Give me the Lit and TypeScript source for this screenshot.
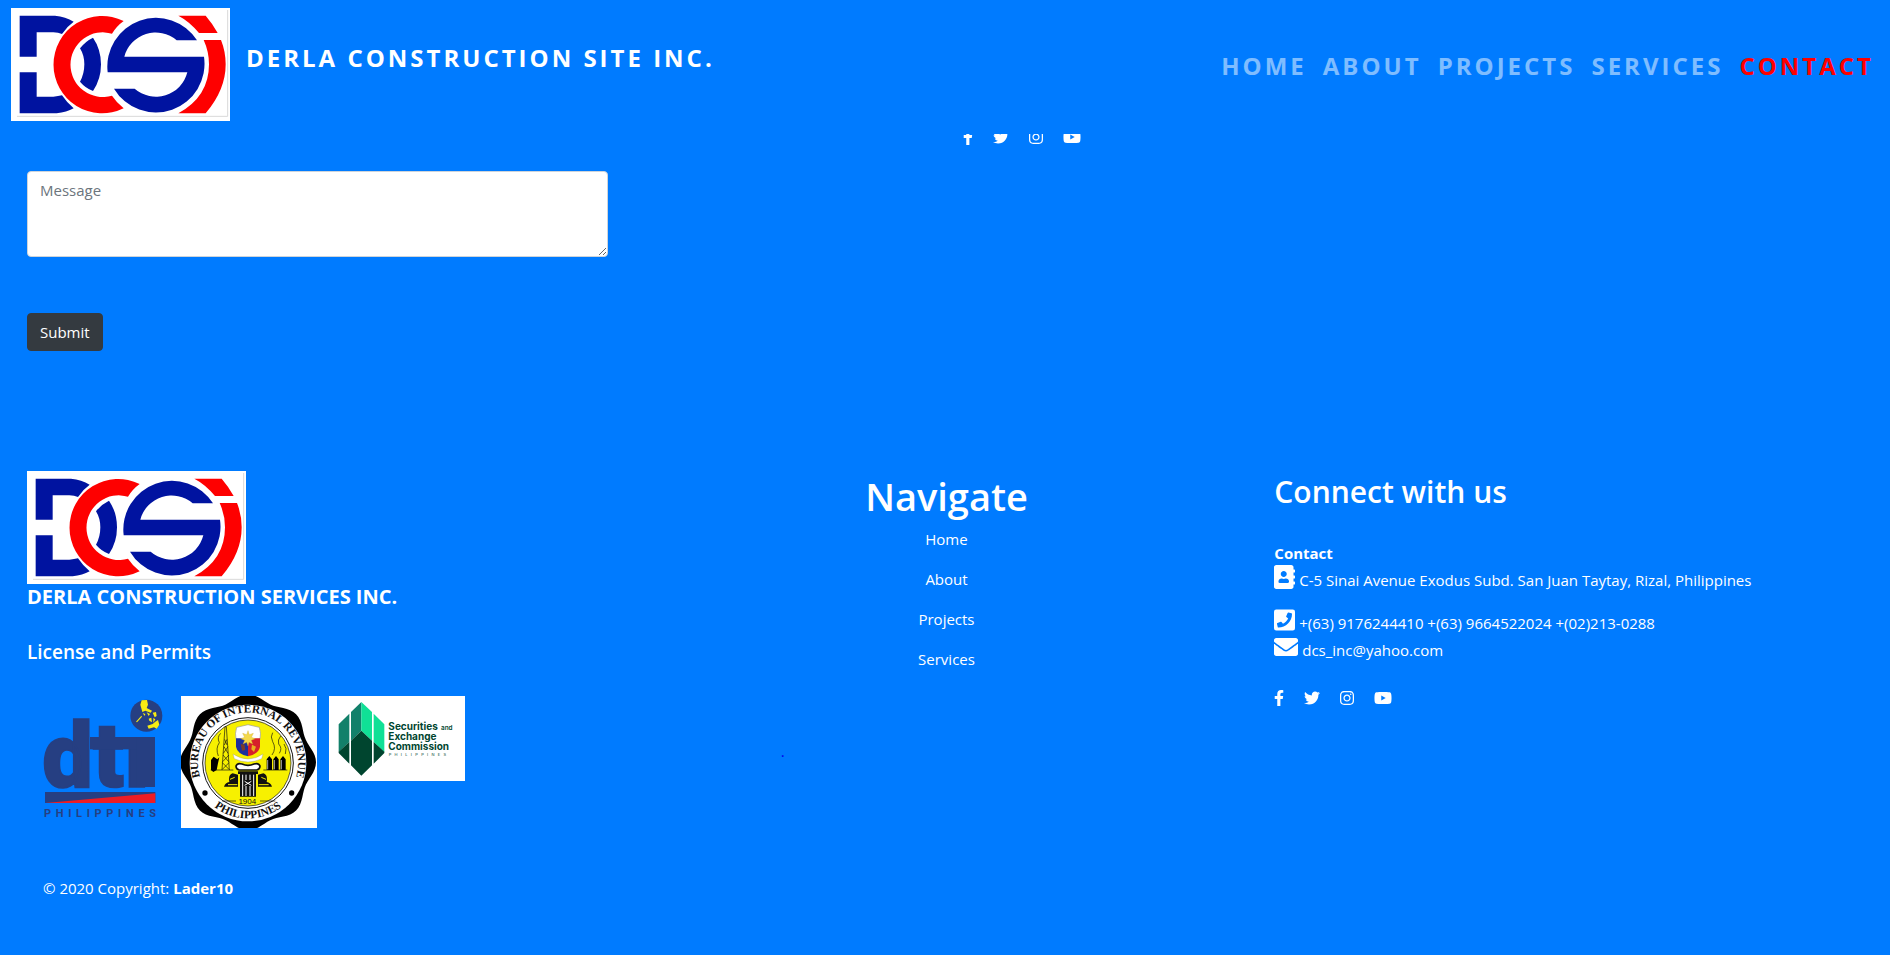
import { LitElement, html, css } from "lit";
import { customElement, property } from "lit/decorators.js";

interface Glyph {
  width: number;
  path: string;
}

const ICONS: Record<string, Glyph> = {
  facebook: {
    width: 320,
    path: "M279.14 288l14.22-92.66h-88.91v-60.13c0-25.35 12.42-50.06 52.24-50.06h40.42V6.26S260.43 0 225.36 0c-73.22 0-121.08 44.38-121.08 124.72v70.62H22.89V288h81.39v224h100.17V288z",
  },
  twitter: {
    width: 512,
    path: "M459.37 151.716c.325 4.548.325 9.097.325 13.645 0 138.72-105.583 298.558-298.558 298.558-59.452 0-114.68-17.219-161.137-47.106 8.447.974 16.568 1.299 25.34 1.299 49.055 0 94.213-16.568 130.274-44.832-46.132-.975-84.792-31.188-98.112-72.772 6.498.974 12.995 1.624 19.818 1.624 9.421 0 18.843-1.3 27.614-3.573-48.081-9.747-84.143-51.98-84.143-102.985v-1.299c13.969 7.797 30.214 12.67 47.431 13.319-28.264-18.843-46.781-51.005-46.781-87.391 0-19.492 5.197-37.36 14.294-52.954 51.655 63.675 129.3 105.258 216.365 109.807-1.624-7.797-2.599-15.918-2.599-24.04 0-57.828 46.782-104.934 104.934-104.934 30.213 0 57.502 12.67 76.67 33.137 23.715-4.548 46.456-13.32 66.599-25.34-7.798 24.366-24.366 44.833-46.132 57.827 21.117-2.273 41.584-8.122 60.426-16.243-14.292 20.791-32.161 39.308-52.628 54.253z",
  },
  instagram: {
    width: 448,
    path: "M224.1 141c-63.6 0-114.9 51.3-114.9 114.9s51.3 114.9 114.9 114.9S339 319.5 339 255.9 287.7 141 224.1 141zm0 189.6c-41.1 0-74.7-33.5-74.7-74.7s33.5-74.7 74.7-74.7 74.7 33.5 74.7 74.7-33.6 74.7-74.7 74.7zm146.4-194.3c0 14.9-12 26.8-26.8 26.8-14.9 0-26.8-12-26.8-26.8s12-26.8 26.8-26.8 26.8 12 26.8 26.8zm76.1 27.2c-1.7-35.9-9.9-67.7-36.2-93.9-26.2-26.2-58-34.4-93.9-36.2-37-2.1-147.9-2.1-184.9 0-35.8 1.7-67.6 9.9-93.9 36.1s-34.4 58-36.2 93.9c-2.1 37-2.1 147.9 0 184.9 1.7 35.9 9.9 67.7 36.2 93.9s58 34.4 93.9 36.2c37 2.1 147.9 2.1 184.9 0 35.9-1.7 67.7-9.9 93.9-36.2 26.2-26.2 34.4-58 36.2-93.9 2.1-37 2.1-147.8 0-184.8zM398.8 388c-7.8 19.6-22.9 34.7-42.6 42.6-29.5 11.7-99.5 9-132.1 9s-102.7 2.6-132.1-9c-19.6-7.8-34.7-22.9-42.6-42.6-11.7-29.5-9-99.5-9-132.1s-2.6-102.7 9-132.1c7.8-19.6 22.9-34.7 42.6-42.6 29.5-11.7 99.5-9 132.1-9s102.7-2.6 132.1 9c19.6 7.8 34.7 22.9 42.6 42.6 11.7 29.5 9 99.5 9 132.1s2.7 102.7-9 132.1z",
  },
  youtube: {
    width: 576,
    path: "M549.655 124.083c-6.281-23.65-24.787-42.276-48.284-48.597C458.781 64 288 64 288 64S117.22 64 74.629 75.486c-23.497 6.322-42.003 24.947-48.284 48.597-11.412 42.867-11.412 132.305-11.412 132.305s0 89.438 11.412 132.305c6.281 23.65 24.787 41.5 48.284 47.821C117.22 448 288 448 288 448s170.78 0 213.371-11.486c23.497-6.321 42.003-24.171 48.284-47.821 11.412-42.867 11.412-132.305 11.412-132.305s0-89.438-11.412-132.305zm-317.51 213.508V175.185l142.739 81.205-142.739 81.201z",
  },
  address: {
    width: 448,
    path: "M436 160c6.6 0 12-5.4 12-12v-40c0-6.6-5.4-12-12-12h-20V48c0-26.5-21.5-48-48-48H48C21.5 0 0 21.5 0 48v416c0 26.5 21.5 48 48 48h320c26.5 0 48-21.5 48-48v-48h20c6.6 0 12-5.4 12-12v-40c0-6.6-5.4-12-12-12h-20v-64h20c6.6 0 12-5.4 12-12v-40c0-6.6-5.4-12-12-12h-20v-64h20zm-228-32c35.3 0 64 28.7 64 64s-28.7 64-64 64-64-28.7-64-64 28.7-64 64-64zm112 236.8c0 10.6-10 19.2-22.4 19.2H118.4C106 384 96 375.4 96 364.8v-19.2c0-31.8 30.1-57.6 67.2-57.6h5c12.3 5.1 25.7 8 39.8 8s27.6-2.9 39.8-8h5c37.1 0 67.2 25.8 67.2 57.6v19.2z",
  },
  phone: {
    width: 448,
    path: "M400 32H48A48 48 0 0 0 0 80v352a48 48 0 0 0 48 48h352a48 48 0 0 0 48-48V80a48 48 0 0 0-48-48zM94 416c-7.033 0-13.057-4.873-14.616-11.627l-14.998-65a15 15 0 0 1 8.707-17.16l69.998-29.999a15 15 0 0 1 17.518 4.289l30.997 37.885c48.944-22.963 88.297-62.858 110.781-110.78l-37.886-30.997a15.001 15.001 0 0 1-4.289-17.518l30-69.998a15 15 0 0 1 17.16-8.707l65 14.998A14.997 14.997 0 0 1 384 126c0 160.292-129.945 290-290 290z",
  },
  envelope: {
    width: 512,
    path: "M502.3 190.8c3.9-3.1 9.7-.2 9.7 4.7V400c0 26.5-21.5 48-48 48H48c-26.5 0-48-21.5-48-48V195.6c0-5 5.7-7.8 9.7-4.7 22.4 17.4 52.1 39.5 154.1 113.6 21.1 15.4 56.7 47.8 92.2 47.6 35.7.3 72-32.8 92.3-47.6 102-74.1 131.6-96.3 154-113.7zM256 320c23.2.4 56.6-29.2 73.4-41.4 132.7-96.3 142.8-104.7 173.4-128.7 5.8-4.5 9.2-11.5 9.2-18.9v-19c0-26.5-21.5-48-48-48H48c-26.5 0-48 21.5-48 48v19c0 7.4 3.4 14.3 9.2 18.9 30.6 23.9 40.7 32.4 173.4 128.7 16.8 12.2 50.2 41.8 73.4 41.4z",
  },
};

const icon = (name: string, size: number) => {
  const g = ICONS[name];
  return html`<svg
    class="icon"
    width=${(g.width / 512) * size}
    height=${size}
    viewBox="0 0 ${g.width} 512"
    aria-hidden="true"
  ><path fill="currentColor" d=${g.path}></path></svg>`;
};

/** Outline of the eight-lobed badge behind the BIR seal. */
const lobedOutline = (cx: number, cy: number): string => {
  const pts: string[] = [];
  for (let deg = 0; deg < 360; deg += 3) {
    const a = (deg * Math.PI) / 180;
    const r = 195 + 9 * Math.cos(8 * a);
    pts.push(`${(cx + r * Math.cos(a)).toFixed(1)},${(cy + r * Math.sin(a)).toFixed(1)}`);
  }
  return pts.join(" ");
};

@customElement("company-logo")
export class CompanyLogo extends LitElement {
  static styles = css`
    :host {
      display: block;
      flex: none;
    }
    .logo {
      display: block;
    }
  `;

  render() {
    return html`<svg class="logo" width="219" height="113" viewBox="33 24 657 339" role="img" aria-label="DCSI logo">
      <rect x="33" y="24" width="657" height="339" fill="#fff"></rect>
      <path d="M683 30V349H51" fill="none" stroke="#d9d9d9" stroke-width="3"></path>
      <g fill="#0013a0">
        <path d="M59 47H165Q197 50 221 65Q200 80 186 102Q175 98 160 97H110V170H59Z"></path>
        <path d="M59 217H110V290H160Q175 289 186 286Q200 307 221 325Q200 337 170 340H59Z"></path>
        <path d="M279 113Q303 148 303 193Q303 238 279 273Q256 264 240 245Q253 222 253 193Q253 166 240 145Q256 124 279 113Z"></path>
        <path d="M591 121H530A97 97 0 0 0 373 170H612A146 146 0 0 1 342 266H404A97 97 0 0 0 562 217H323A146 146 0 0 1 591 121Z"></path>
      </g>
      <g fill="#fe0000">
        <path d="M371 63A146 146 0 1 0 371 325Q350 308 336 287A97 97 0 1 1 336 101Q350 78 371 63Z"></path>
        <path d="M535 47H617Q637 70 653 99H597Q568 64 535 47Z"></path>
        <path d="M611 120H663Q677 155 677 193Q677 270 617 340H535Q627 290 627 193Q627 155 611 120Z"></path>
      </g>
    </svg>`;
  }
}

@customElement("social-links")
export class SocialLinks extends LitElement {
  static styles = css`
    :host {
      display: block;
    }
    .links {
      display: flex;
      gap: 20px;
    }
    .link {
      display: block;
      color: #fff;
    }
    .icon {
      display: block;
    }
  `;

  render() {
    return html`<div class="links">
      ${["facebook", "twitter", "instagram", "youtube"].map(
        (n) => html`<a class="link" href="#${n}" aria-label=${n}>${icon(n, 16)}</a>`,
      )}
    </div>`;
  }
}

@customElement("permit-badges")
export class PermitBadges extends LitElement {
  static styles = css`
    :host {
      display: block;
    }
    .row {
      display: flex;
      flex-wrap: wrap;
      align-items: flex-start;
      gap: 12px;
      padding: 0 6px;
    }
    .badge {
      display: block;
    }
    .dti-mark {
      font: 900 270px Roboto, sans-serif;
      stroke: #263f82;
      stroke-width: 5px;
    }
    .dti-sub {
      font: 700 33px Roboto, sans-serif;
      letter-spacing: 14px;
    }
    .seal-text {
      font: 700 34px "Liberation Serif", serif;
    }
    .seal-year {
      font: 400 24px "Liberation Sans", sans-serif;
    }
    .sec-name {
      font: 700 30px Inter, sans-serif;
    }
    .sec-and {
      font: 600 19px Inter, sans-serif;
    }
    .sec-sub {
      font: 400 12px Inter, sans-serif;
      letter-spacing: 10px;
    }
  `;

  private dti() {
    return html`<svg class="badge" width="136" height="132" viewBox="99 48 408 396" role="img" aria-label="Department of Trade and Industry">
      <g fill="#263f82">
        <text class="dti-mark" x="127" y="320">dtı</text>
        <rect x="270" y="171" width="195" height="37"></rect>
        <rect x="410" y="171" width="55" height="150"></rect>
        <circle cx="439" cy="107" r="48"></circle>
        <rect x="135" y="336" width="331" height="33"></rect>
        <text class="dti-sub" x="132" y="411">PHILIPPINES</text>
      </g>
      <path d="M135 369L466 340V369Z" fill="#ee1c25"></path>
      <path
        d="M425 61L441 60L444 74L440 84L456 92L452 98L436 92L427 96L421 74ZM408 125L424 107L426 110L411 127ZM440 97L450 102L446 108ZM458 98L468 96L470 108L464 112ZM428 99L436 102L434 108ZM446 116L454 113L456 127L448 122ZM460 114L466 118L460 128ZM442 137L458 132L466 125L474 120L478 134L470 146L462 142L446 146Z"
        fill="#f7ec13"
      ></path>
    </svg>`;
  }

  private bir() {
    return html`<svg class="badge" width="136" height="132" viewBox="543 48 408 396" role="img" aria-label="Bureau of Internal Revenue">
      <defs>
        <path id="seal-top" d="M603.5 300A150 150 0 1 1 884.5 300"></path>
        <path id="seal-bottom" d="M599 332A168 168 0 0 0 889 332"></path>
      </defs>
      <rect x="543" y="48" width="408" height="396" fill="#fff"></rect>
      <polygon points=${lobedOutline(744, 247)} fill="#000"></polygon>
      <circle cx="744" cy="249" r="175" fill="#fff"></circle>
      <circle cx="744" cy="249" r="136" fill="#fff" stroke="#111" stroke-width="3"></circle>
      <circle cx="744" cy="249" r="129" fill="#f7f000" stroke="#111" stroke-width="2"></circle>
      <text class="seal-text" fill="#111" text-anchor="middle">
        <textPath href="#seal-top" startOffset="50%">BUREAU OF INTERNAL REVENUE</textPath>
      </text>
      <text class="seal-text" fill="#111" text-anchor="middle">
        <textPath href="#seal-bottom" startOffset="50%">PHILIPPINES</textPath>
      </text>
      <circle cx="615" cy="339" r="8"></circle>
      <circle cx="875" cy="339" r="8"></circle>
      <path d="M710 142L744 134L778 142Q784 160 780 178H708Q704 160 710 142Z" fill="#fff" stroke="#999" stroke-width="2"></path>
      <path d="M708 175H744V229Q712 222 708 200Z" fill="#1c2f9c"></path>
      <path d="M744 175H780V200Q776 222 744 229Z" fill="#d6202a"></path>
      <path d="M722 192L734 194L736 210L726 212Z" fill="#7a3b2a"></path>
      <path d="M756 194L768 200L762 216L754 208Z" fill="#e8b020"></path>
      <path d="M744 152L748 164L760 160L754 172L766 176L754 181L758 192L747 187L744 198L740 187L729 192L734 181L722 176L734 172L728 160L740 164Z" fill="#f4d94a" stroke="#caa41c" stroke-width="1"></path>
      <path d="M699 222Q744 252 789 222L785 236Q744 256 703 236Z" fill="#fff" stroke="#888" stroke-width="1"></path>
      <g fill="none" stroke="#111" stroke-width="2">
        <path d="M666 270L675 140H679L688 270M668 245L687 225M686 245L669 225M670 220L684 200M684 220L672 200M673 195L681 178M681 195L674 178M667 268L687 248M687 268L667 248"></path>
        <path d="M655 228Q646 205 658 188Q650 172 662 160M816 225Q830 205 818 185Q810 170 818 158M838 220Q848 205 836 192Q832 180 842 168M856 222Q862 205 852 192"></path>
        <path d="M632 270H700M790 270H862"></path>
        <path d="M666 363H708M780 363H826"></path>
      </g>
      <path d="M633 270V240L641 230L652 238L658 232L654 250L650 270L640 276Z"></path>
      <path d="M800 270V238L808 228L816 238V270ZM820 270V238L828 228L836 238V270ZM841 270V238L849 228L857 238V270Z"></path>
      <path d="M803 240V268M823 240V268M844 240V268" stroke="#fff" stroke-width="2"></path>
      <path d="M708 258Q712 248 726 252Q744 260 762 252Q776 248 780 258Q780 268 770 270H718Q708 268 708 258Z" fill="#fff" stroke="#111" stroke-width="5"></path>
      <path d="M714 274H774V282H768V350H720V282H714Z" fill="#111"></path>
      <path d="M728 284V348M738 284V300M738 318V348M750 284V300M750 318V348M761 284V348M734 304L754 316M754 304L734 316" stroke="#fff" stroke-width="3"></path>
      <path d="M672 320Q676 308 688 306Q684 284 698 280L714 284V320ZM816 320Q812 308 800 306Q804 284 790 280L774 284V320Z" fill="#111"></path>
      <path d="M690 298L704 292M798 298L784 292M684 314H712M776 314H806" stroke="#f7f000" stroke-width="3"></path>
      <text class="seal-year" x="742" y="373" fill="#111" text-anchor="middle">1904</text>
    </svg>`;
  }

  private sec() {
    return html`<svg class="badge" width="136" height="85" viewBox="987 48 408 255" role="img" aria-label="Securities and Exchange Commission">
      <rect x="987" y="48" width="408" height="255" fill="#fff"></rect>
      <path d="M1016 133L1048 101V186L1016 216ZM1053 96L1084 66V152L1053 182Z" fill="#12806a"></path>
      <path d="M1084 66L1116 96V182L1084 152ZM1121 101L1153 133V216L1121 186Z" fill="#10e096"></path>
      <path d="M1084 152L1116 182V256L1084 287L1053 256V182ZM1048 186V251L1016 219V215ZM1121 186V251L1153 219V215Z" fill="#00452f"></path>
      <g fill="#00452f">
        <text class="sec-name" x="1165" y="150">Securities</text>
        <text class="sec-and" x="1323" y="150">and</text>
        <text class="sec-name" x="1165" y="179">Exchange</text>
        <text class="sec-name" x="1165" y="209">Commission</text>
        <text class="sec-sub" x="1166" y="227">PHILIPPINES</text>
      </g>
    </svg>`;
  }

  render() {
    return html`<div class="row">${this.dti()}${this.bir()}${this.sec()}</div>`;
  }
}

@customElement("site-header")
export class SiteHeader extends LitElement {
  @property() active = "Contact";

  static styles = css`
    :host {
      display: block;
      position: sticky;
      top: 0;
      z-index: 1;
      background: #007bff;
    }
    .bar {
      display: flex;
      align-items: flex-start;
      gap: 16px;
      padding: 8px 16px 13px 11px;
    }
    .brand {
      display: flex;
      align-items: flex-start;
      gap: 16px;
      flex: 1;
      color: #fff;
      text-decoration: none;
    }
    .name {
      margin-top: 32px;
    }
    .name,
    .item {
      font-size: 24px;
      font-weight: 700;
      line-height: 36px;
      letter-spacing: 3px;
      text-transform: uppercase;
    }
    .menu {
      display: flex;
      gap: 16px;
      margin-top: 40px;
    }
    .item {
      color: rgba(255, 255, 255, 0.5);
      text-decoration: none;
    }
    .item.active {
      color: #f00;
    }
  `;

  render() {
    const items = ["Home", "About", "Projects", "Services", "Contact"];
    return html`<header class="bar">
      <a class="brand" href="#home">
        <company-logo></company-logo>
        <span class="name">Derla Construction Site Inc.</span>
      </a>
      <nav class="menu">
        ${items.map(
          (i) => html`<a class="item ${i === this.active ? "active" : ""}" href="#${i.toLowerCase()}">${i}</a>`,
        )}
      </nav>
    </header>`;
  }
}

@customElement("app-root")
export class AppRoot extends LitElement {
  static styles = css`
    :host {
      display: block;
      min-height: 100vh;
      background: #007bff;
      color: #fff;
      font-family: "Open Sans", "Noto Sans", sans-serif;
      font-size: 15px;
      line-height: 24px;
    }
    .contact {
      display: grid;
      grid-template-columns: 1fr 1fr;
      gap: 32px;
      padding: 0 24px 0 27px;
    }
    .form {
      display: flex;
      flex-direction: column;
      align-items: flex-start;
      gap: 56px;
      padding-top: 37px;
    }
    .message {
      display: block;
      box-sizing: border-box;
      width: 100%;
      max-width: 581px;
      height: 86px;
      padding: 6px 12px;
      border: 1px solid #ced4da;
      border-radius: 4px;
      background: #fff;
      color: #495057;
      font: inherit;
      resize: vertical;
    }
    .message::placeholder {
      color: #6c757d;
      opacity: 1;
    }
    .submit {
      padding: 6px 12px;
      border: 1px solid #343a40;
      border-radius: 4px;
      background: #343a40;
      color: #fff;
      font: inherit;
    }
    /* The row slides under the sticky header. */
    .peek {
      margin-top: -5px;
    }
    .footer {
      display: grid;
      grid-template-columns: repeat(3, 1fr);
      gap: 32px;
      padding: 120px 24px 0 27px;
    }
    .company,
    .permits,
    .navigate,
    .connect {
      margin: 0;
      font-weight: 600;
    }
    .company {
      font-size: 20px;
      font-weight: 700;
      line-height: 26px;
    }
    .permits {
      margin: 30px 0 32px;
      font-size: 19px;
      line-height: 24px;
    }
    .middle {
      text-align: center;
    }
    .navigate {
      margin-bottom: 6px;
      font-size: 38px;
      line-height: 50px;
    }
    .list {
      display: flex;
      flex-direction: column;
      gap: 16px;
      margin: 0;
      padding: 0;
      list-style: none;
    }
    .link {
      color: #fff;
      text-decoration: none;
    }
    .dot {
      display: block;
      margin-top: 68px;
      color: #00e;
      text-align: left;
      text-decoration: none;
    }
    .mark {
      margin-left: 130px;
    }
    .connect {
      margin-bottom: 28px;
      font-size: 30px;
      line-height: 42px;
    }
    .line {
      display: block;
      color: #fff;
      font-style: normal;
      text-decoration: none;
    }
    .spaced {
      margin-bottom: 16px;
    }
    .icon {
      vertical-align: -3px;
    }
    .social {
      margin-top: 28px;
    }
    .copyright {
      padding: 48px 43px 24px;
    }
  `;

  render() {
    return html`
      <site-header active="Contact"></site-header>
      <main class="contact">
        <form class="form" @submit=${(e: Event) => e.preventDefault()}>
          <textarea class="message" aria-label="Message" placeholder="Message"></textarea>
          <button class="submit" type="submit">Submit</button>
        </form>
        <social-links class="peek"></social-links>
      </main>
      <footer>
        <div class="footer">
          <section>
            <company-logo></company-logo>
            <h2 class="company">DERLA CONSTRUCTION SERVICES INC.</h2>
            <h2 class="permits">License and Permits</h2>
            <permit-badges></permit-badges>
          </section>
          <section class="middle">
            <h1 class="navigate">Navigate</h1>
            <ul class="list">
              ${["Home", "About", "Projects", "Services"].map(
                (i) => html`<li><a class="link" href="#${i.toLowerCase()}">${i}</a></li>`,
              )}
            </ul>
            <a class="dot" href="#top"><span class="mark">.</span></a>
          </section>
          <section>
            <h2 class="connect">Connect with us</h2>
            <strong class="line">Contact</strong>
            <address class="line spaced">${icon("address", 24)} C-5 Sinai Avenue Exodus Subd. San Juan Taytay, Rizal, Philippines</address>
            <span class="line">${icon("phone", 24)} +(63) 9176244410 +(63) 9664522024 +(02)213-0288</span>
            <a class="line" href="mailto:dcs_inc@yahoo.com">${icon("envelope", 24)} dcs_inc@yahoo.com</a>
            <social-links class="social"></social-links>
          </section>
        </div>
        <div class="copyright">© 2020 Copyright: <strong>Lader10</strong></div>
      </footer>
    `;
  }
}
